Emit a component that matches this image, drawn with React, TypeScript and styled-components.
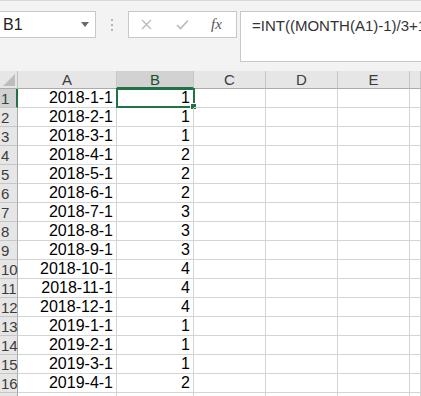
import React from 'react';
import styled, { createGlobalStyle } from 'styled-components';

const GlobalStyle = createGlobalStyle`
  html, body {
    margin: 0;
    padding: 0;
    background: #ffffff;
    overflow: hidden;
  }
  body {
    font-family: "Liberation Sans", Arial, sans-serif;
  }
`;

const green = '#217346';

const Page = styled.div`
  width: 421px;
  height: 396px;
  overflow: hidden;
  background: #ffffff;
`;

// formula bar area
const Toolbar = styled.div`
  height: 71px;
  box-sizing: border-box;
  padding-top: 10px;
  background: #f3f3f3;
  border-top: 1px solid #d8d8d8;
  display: flex;
  align-items: flex-start;
`;

const NameBox = styled.div`
  width: 96px;
  height: 27px;
  box-sizing: border-box;
  background: #fff;
  border: 1px solid #c8c8c8;
  border-left: none;
  display: flex;
  align-items: center;
  justify-content: space-between;
  padding: 0 6px 0 3px;
  font-size: 16px;
  color: #222;
`;

const Arrow = styled.span`
  width: 0;
  height: 0;
  border-left: 4px solid transparent;
  border-right: 4px solid transparent;
  border-top: 5px solid #6a6a6a;
`;

const Grip = styled.div`
  width: 32px;
  height: 27px;
  display: flex;
  flex-direction: column;
  align-items: center;
  justify-content: center;
  gap: 3px;
`;

const Dot = styled.span`
  width: 2px;
  height: 2px;
  background: #b5b5b5;
`;

const Buttons = styled.div`
  width: 109px;
  height: 27px;
  box-sizing: border-box;
  background: #fff;
  border: 1px solid #c8c8c8;
  display: flex;
  align-items: center;
  padding-left: 12px;
`;

const IconSlot = styled.span<{ w: number }>`
  width: ${p => p.w}px;
  display: flex;
  align-items: center;
`;

const Fx = styled.span`
  font-family: "Liberation Serif", "Times New Roman", serif;
  font-style: italic;
  font-size: 15px;
  color: #555;
`;

const FormulaBox = styled.div`
  flex: 1;
  min-width: 0;
  margin-left: 3px;
  height: 51px;
  box-sizing: border-box;
  background: #fff;
  border: 1px solid #c8c8c8;
  border-right: none;
  padding: 5px 0 0 11px;
  font-size: 15px;
  color: #333;
  white-space: nowrap;
  overflow: hidden;
`;

// sheet
const Sheet = styled.div`
  display: grid;
  grid-template-columns: 18px 99px 77px 72px 72px 72px 1fr;
  grid-auto-rows: 19px;
  grid-template-rows: 18px;
`;

const Corner = styled.div`
  background: #e6e6e6;
  border-right: 1px solid #c0c0c0;
  border-bottom: 1px solid #ababab;
  box-sizing: border-box;
  display: flex;
  align-items: flex-end;
  justify-content: flex-end;
  padding: 0 2px 2px 0;
`;

const ColHead = styled.div<{ active?: boolean }>`
  box-sizing: border-box;
  background: ${p => (p.active ? '#d2d2d2' : '#e6e6e6')};
  border-right: 1px solid #c6c6c6;
  border-bottom: ${p => (p.active ? `2px solid ${green}` : '1px solid #ababab')};
  display: flex;
  align-items: center;
  justify-content: center;
  font-size: 15px;
  color: ${p => (p.active ? '#1f4e33' : '#3c3c3c')};
  padding-top: ${p => (p.active ? '1px' : '0')};
`;

const RowHead = styled.div<{ active?: boolean }>`
  box-sizing: border-box;
  background: ${p => (p.active ? '#d2d2d2' : '#e6e6e6')};
  border-right: ${p => (p.active ? `2px solid ${green}` : '1px solid #ababab')};
  border-bottom: 1px solid #c6c6c6;
  display: flex;
  align-items: center;
  padding-left: 1px;
  font-size: 15px;
  color: ${p => (p.active ? '#1f4e33' : '#3c3c3c')};
`;

const Cell = styled.div`
  position: relative;
  box-sizing: border-box;
  border-right: 1px solid #d4d4d4;
  border-bottom: 1px solid #d4d4d4;
  display: flex;
  align-items: center;
  justify-content: flex-end;
  padding-right: 3px;
  font-size: 16px;
  color: #000;
`;

const Selection = styled.div`
  position: absolute;
  left: -1px;
  top: -1px;
  right: -2px;
  bottom: -1px;
  border: 2px solid ${green};
  pointer-events: none;
`;

const Handle = styled.div`
  position: absolute;
  right: -4px;
  bottom: -4px;
  width: 5px;
  height: 5px;
  background: ${green};
  border: 1px solid #fff;
`;

const rows: [string, number][] = [
  ['2018-1-1', 1],
  ['2018-2-1', 1],
  ['2018-3-1', 1],
  ['2018-4-1', 2],
  ['2018-5-1', 2],
  ['2018-6-1', 2],
  ['2018-7-1', 3],
  ['2018-8-1', 3],
  ['2018-9-1', 3],
  ['2018-10-1', 4],
  ['2018-11-1', 4],
  ['2018-12-1', 4],
  ['2019-1-1', 1],
  ['2019-2-1', 1],
  ['2019-3-1', 1],
  ['2019-4-1', 2],
];

const columns = ['A', 'B', 'C', 'D', 'E', ''];

const App: React.FC = () => {
  return (
    <Page>
      <GlobalStyle />
      <Toolbar>
        <NameBox>
          B1
          <Arrow />
        </NameBox>
        <Grip>
          <Dot />
          <Dot />
          <Dot />
        </Grip>
        <Buttons>
          <IconSlot w={35}>
            <svg width="11" height="11" viewBox="0 0 11 11">
              <path d="M1 1L10 10M10 1L1 10" stroke="#b9b9b9" strokeWidth="1.3" fill="none" />
            </svg>
          </IconSlot>
          <IconSlot w={35}>
            <svg width="13" height="11" viewBox="0 0 13 11">
              <path d="M1 6L4.5 9.5L12 1.5" stroke="#b9b9b9" strokeWidth="1.6" fill="none" />
            </svg>
          </IconSlot>
          <IconSlot w={20}>
            <Fx>fx</Fx>
          </IconSlot>
        </Buttons>
        <FormulaBox>=INT((MONTH(A1)-1)/3+1)</FormulaBox>
      </Toolbar>
      <Sheet>
        <Corner>
          <svg width="12" height="12" viewBox="0 0 12 12">
            <path d="M12 0L12 12L0 12Z" fill="#bdbdbd" />
          </svg>
        </Corner>
        {columns.map(c => (
          <ColHead key={c || 'F'} active={c === 'B'}>
            {c}
          </ColHead>
        ))}
        {rows.map(([date, q], i) => (
          <React.Fragment key={date}>
            <RowHead active={i === 0}>{i + 1}</RowHead>
            <Cell>{date}</Cell>
            <Cell>
              {q}
              {i === 0 && (
                <Selection>
                  <Handle />
                </Selection>
              )}
            </Cell>
            <Cell />
            <Cell />
            <Cell />
            <Cell />
          </React.Fragment>
        ))}
        <RowHead />
        <Cell />
        <Cell />
        <Cell />
        <Cell />
        <Cell />
        <Cell />
      </Sheet>
    </Page>
  );
};

export default App;
